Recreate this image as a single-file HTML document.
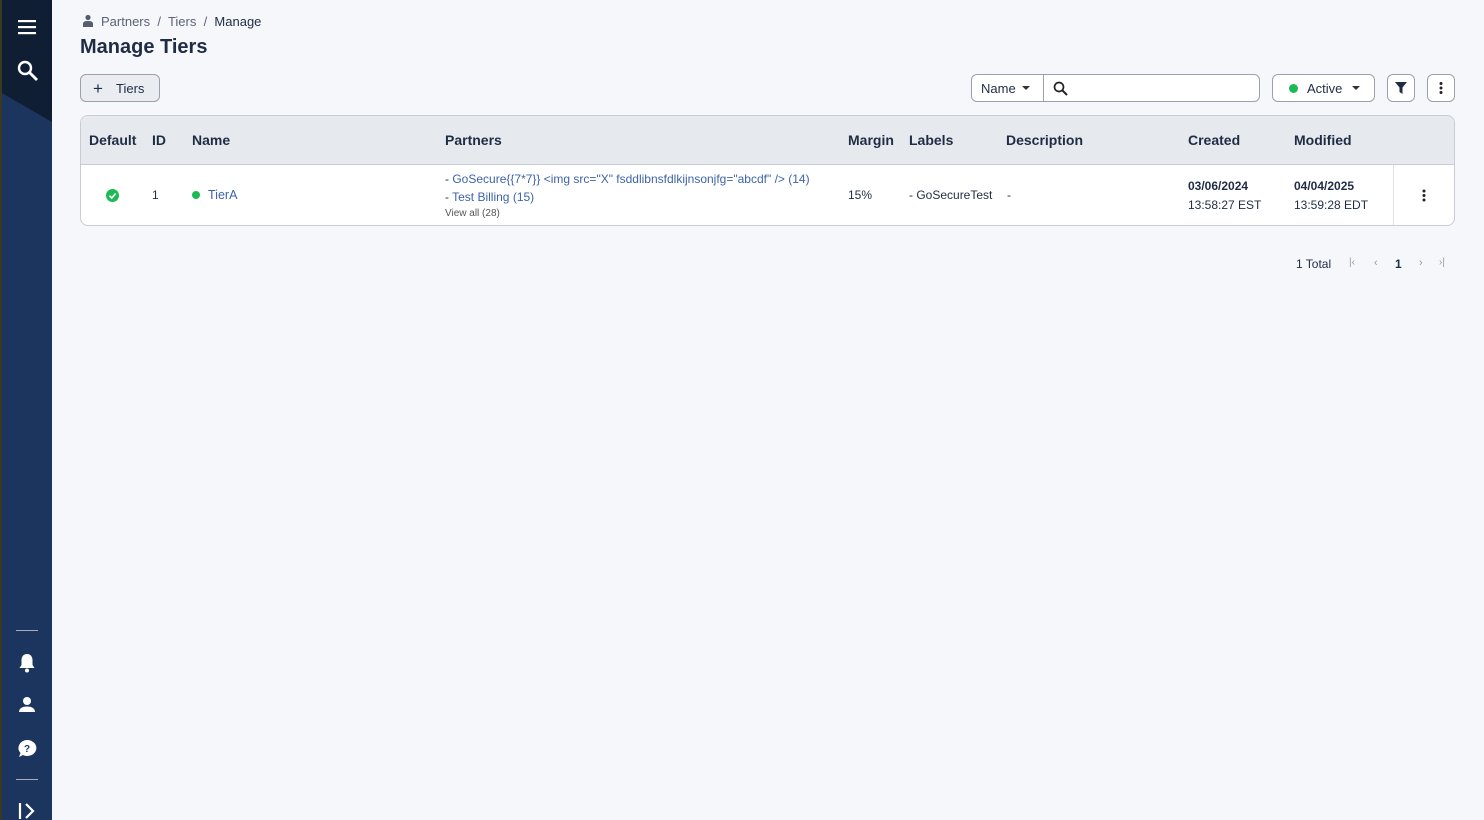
<!DOCTYPE html>
<html><head><style>
*{box-sizing:border-box;margin:0;padding:0}
body{width:1484px;height:820px;background:#f6f7fb;font-family:"Liberation Sans",sans-serif;color:#1f2d44;position:relative;overflow:hidden}
.sb{position:absolute;left:0;top:0;width:52px;height:820px;background:#1c355e}
.sb .strip{position:absolute;left:0;top:0;width:2px;height:820px;background:#3a3a22}
.abs{position:absolute}
.t{position:absolute;white-space:nowrap}
.btn{position:absolute;border:1px solid #9aa1ab;border-radius:6px;background:#f6f7fb}
th,td{}
.link{color:#3e63a8}
</style></head><body>
<div class="sb">
 <svg class="abs" style="left:0;top:0" width="52" height="125"><polygon points="0,0 52,0 52,122 0,92" fill="#0f1e33"/></svg>
 <div class="strip"></div>
 <svg class="abs" style="left:18;top:19px;left:18px" width="18" height="16"><rect y="1" width="18" height="2.2" fill="#fff"/><rect y="7" width="18" height="2.2" fill="#fff"/><rect y="13" width="18" height="2.2" fill="#fff"/></svg>
 <svg class="abs" style="left:17px;top:60px" width="22" height="22"><circle cx="8" cy="8" r="6" fill="none" stroke="#fff" stroke-width="2.4"/><line x1="12.5" y1="12.5" x2="20" y2="20" stroke="#fff" stroke-width="2.8"/></svg>
 <div class="abs" style="left:16px;top:630px;width:22px;height:1px;background:#aab"></div>
 <svg class="abs" style="left:17px;top:652px" width="20" height="22"><path d="M10 2c-3.5 0-5.5 2.8-5.5 6v5l-2 3h15l-2-3V8c0-3.2-2-6-5.5-6z" fill="#fff"/><circle cx="10" cy="18.5" r="2" fill="#fff"/></svg>
 <svg class="abs" style="left:17px;top:695px" width="20" height="20"><circle cx="10" cy="6" r="4" fill="#fff"/><path d="M2 17c0-4 4-5.5 8-5.5s8 1.5 8 5.5z" fill="#fff"/></svg>
 <svg class="abs" style="left:16px;top:738px" width="22" height="22"><path d="M11 2a9 8 0 1 1-4 15l-4 2 1.5-4A9 8 0 0 1 11 2z" fill="#fff"/><text x="11" y="14" font-size="10" font-weight="bold" text-anchor="middle" fill="#1c355e" font-family="Liberation Sans">?</text></svg>
 <div class="abs" style="left:16px;top:779px;width:22px;height:1px;background:#aab"></div>
 <svg class="abs" style="left:18px;top:801px" width="20" height="19"><line x1="2" y1="2" x2="2" y2="18" stroke="#fff" stroke-width="2.2"/><polyline points="8,3 15,10 8,17" fill="none" stroke="#fff" stroke-width="2.2"/></svg>
</div>

<svg class="abs" style="left:82px;top:14px" width="12" height="14"><circle cx="6" cy="3.5" r="2.6" fill="#555e6c"/><path d="M1 13V9.5Q1 7 6 7t5 2.5V13z" fill="#555e6c"/></svg>
<div class="t" style="left:101px;top:14px;font-size:13px;color:#5a6475">Partners&nbsp; /&nbsp; Tiers&nbsp; /&nbsp; <span style="color:#1f2d44">Manage</span></div>
<div class="t" style="left:80px;top:36px;font-size:20px;font-weight:bold;color:#1f2d44">Manage Tiers</div>

<div class="btn" style="left:80px;top:74px;width:80px;height:28px;background:#e9ecf0"></div>
<div class="t" style="left:93px;top:79px;font-size:17px">+</div>
<div class="t" style="left:116px;top:81px;font-size:13px">Tiers</div>

<div class="btn" style="left:971px;top:74px;width:289px;height:28px;background:#fff"></div>
<div class="abs" style="left:1043px;top:75px;width:1px;height:26px;background:#9aa1ab"></div>
<div class="t" style="left:981px;top:81px;font-size:13px">Name</div>
<svg class="abs" style="left:1022px;top:86px" width="8" height="5"><polygon points="0,0 8,0 4,4" fill="#333"/></svg>
<svg class="abs" style="left:1053px;top:81px" width="16" height="16"><circle cx="6" cy="6" r="4.5" fill="none" stroke="#222" stroke-width="1.7"/><line x1="9.3" y1="9.3" x2="14" y2="14" stroke="#222" stroke-width="2"/></svg>

<div class="btn" style="left:1272px;top:74px;width:103px;height:28px;background:#fff"></div>
<div class="abs" style="left:1289px;top:84px;width:9px;height:9px;border-radius:50%;background:#1db954"></div>
<div class="t" style="left:1307px;top:81px;font-size:13px">Active</div>
<svg class="abs" style="left:1352px;top:86px" width="8" height="5"><polygon points="0,0 8,0 4,4" fill="#333"/></svg>

<div class="btn" style="left:1387px;top:74px;width:28px;height:28px;background:#fff"></div>
<svg class="abs" style="left:1395px;top:82px" width="12" height="12"><path d="M0 0h12L7.5 5.5V12L4.5 10V5.5z" fill="#1f2d44"/></svg>
<div class="btn" style="left:1427px;top:74px;width:28px;height:28px;background:#fff"></div>
<svg class="abs" style="left:1439px;top:81px" width="4" height="14"><circle cx="2" cy="2.5" r="1.5" fill="#222"/><circle cx="2" cy="7" r="1.5" fill="#222"/><circle cx="2" cy="11.5" r="1.5" fill="#222"/></svg>

<div class="abs" style="left:80px;top:115px;width:1375px;height:111px;border:1px solid #c9cdd3;border-radius:8px;background:#fff;overflow:hidden">
 <div class="abs" style="left:0;top:0;width:1375px;height:49px;background:#e6e9ed;border-bottom:1px solid #c9cdd3"></div>
 <div class="abs" style="left:1312px;top:49px;width:1px;height:62px;background:#dde0e4"></div>
</div>
<div style="font-size:14px;font-weight:bold">
<div class="t" style="left:89px;top:132px">Default</div>
<div class="t" style="left:152px;top:132px">ID</div>
<div class="t" style="left:192px;top:132px">Name</div>
<div class="t" style="left:445px;top:132px">Partners</div>
<div class="t" style="left:848px;top:132px">Margin</div>
<div class="t" style="left:909px;top:132px">Labels</div>
<div class="t" style="left:1006px;top:132px">Description</div>
<div class="t" style="left:1188px;top:132px">Created</div>
<div class="t" style="left:1294px;top:132px">Modified</div>
</div>
<svg class="abs" style="left:106px;top:189px" width="13" height="13"><circle cx="6.5" cy="6.5" r="6.5" fill="#1db954"/><polyline points="3.5,6.8 5.8,9 9.6,4.5" fill="none" stroke="#fff" stroke-width="1.7"/></svg>
<div class="t" style="left:152px;top:188px;font-size:12px">1</div>
<div class="abs" style="left:192px;top:191px;width:8px;height:8px;border-radius:50%;background:#1db954"></div>
<div class="t link" style="left:208px;top:188px;font-size:12.5px">TierA</div>
<div class="t" style="left:445px;top:172px;font-size:12px">- <span class="link">GoSecure{{7*7}} &lt;img src="X" fsddlibnsfdlkijnsonjfg="abcdf" /&gt; (14)</span></div>
<div class="t" style="left:445px;top:190px;font-size:12px">- <span class="link">Test Billing (15)</span></div>
<div class="t" style="left:445px;top:208px;font-size:10px;color:#555">View all (28)</div>
<div class="t" style="left:848px;top:188px;font-size:12px">15%</div>
<div class="t" style="left:909px;top:188px;font-size:12px">- GoSecureTest</div>
<div class="t" style="left:1007px;top:188px;font-size:12px">-</div>
<div class="t" style="left:1188px;top:179px;font-size:12px;font-weight:bold">03/06/2024</div>
<div class="t" style="left:1188px;top:198px;font-size:12px">13:58:27 EST</div>
<div class="t" style="left:1294px;top:179px;font-size:12px;font-weight:bold">04/04/2025</div>
<div class="t" style="left:1294px;top:198px;font-size:12px">13:59:28 EDT</div>
<svg class="abs" style="left:1422px;top:189px" width="4" height="13"><circle cx="2" cy="2" r="1.5" fill="#222"/><circle cx="2" cy="6.5" r="1.5" fill="#222"/><circle cx="2" cy="11" r="1.5" fill="#222"/></svg>

<div class="t" style="left:1296px;top:257px;font-size:12px">1 Total</div>
<div class="t" style="left:1349px;top:257px;font-size:10px;color:#999">|‹</div>
<div class="t" style="left:1374px;top:257px;font-size:11px;color:#999">‹</div>
<div class="t" style="left:1395px;top:257px;font-size:12px;font-weight:bold">1</div>
<div class="t" style="left:1419px;top:257px;font-size:11px;color:#999">›</div>
<div class="t" style="left:1439px;top:257px;font-size:10px;color:#999">›|</div>
</body></html>
